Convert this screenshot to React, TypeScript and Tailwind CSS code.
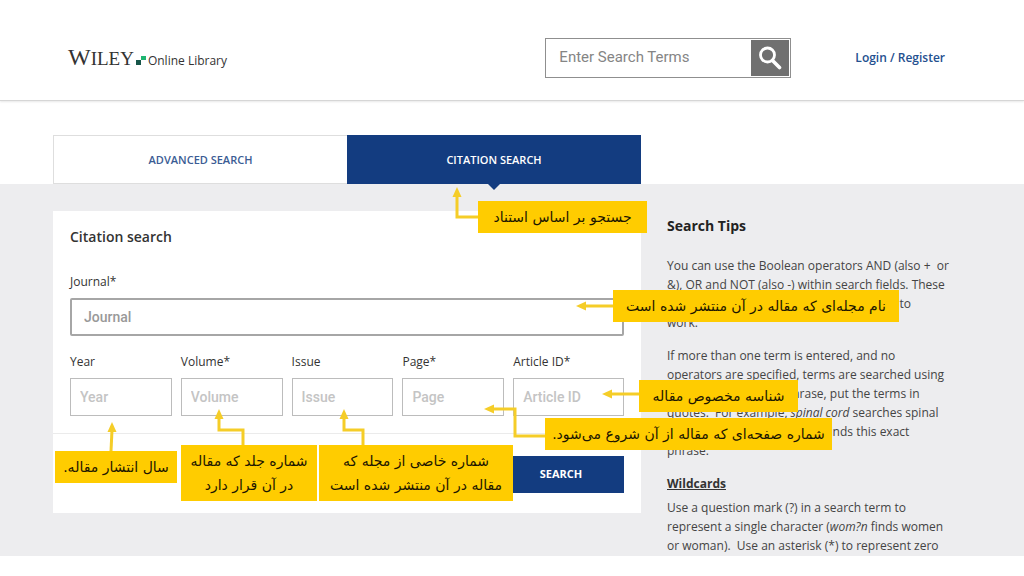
import type { ReactNode } from "react";

type Field = { id: string; label: string; placeholder: string };

const fields: Field[] = [
  { id: "year", label: "Year", placeholder: "Year" },
  { id: "volume", label: "Volume*", placeholder: "Volume" },
  { id: "issue", label: "Issue", placeholder: "Issue" },
  { id: "page", label: "Page*", placeholder: "Page" },
  { id: "article", label: "Article ID*", placeholder: "Article ID" },
];

function Logo() {
  return (
    <a href="#" className="flex items-baseline text-[#333]">
      <span className="font-['Liberation_Serif',serif] text-[24px] leading-6">
        W<span className="text-[19px]">ILEY</span>
      </span>
      <svg viewBox="0 0 10 9" className="mx-0.5 h-[9px] w-[10px]">
        <rect x="0" y="4" width="5" height="5" fill="#17564a" />
        <rect x="5" y="0" width="5" height="4" fill="#1fb571" />
      </svg>
      <span className="text-[12px] font-medium">Online Library</span>
    </a>
  );
}

function Header() {
  return (
    <header className="border-b border-[#d6d6d6] shadow-[0_1px_2px_#e8e8e8]">
      <div className="mx-auto flex h-[100px] max-w-[918px] items-center pt-[15px] pr-[26px] pl-[15px]">
        <Logo />
        <form className="ml-auto flex h-10 w-[246px] border border-[#8f8f8f]">
          <input
            type="search"
            aria-label="Enter Search Terms"
            placeholder="Enter Search Terms"
            className="min-w-0 flex-1 px-[13px] font-[Roboto,sans-serif] text-[15px] outline-none placeholder:text-[#858585]"
          />
          <button type="button" aria-label="Search" className="my-px mr-px flex w-[38px] items-center justify-center bg-[#707070]">
            <svg viewBox="0 0 24 24" className="h-6 w-6" fill="none" stroke="white">
              <circle cx="9.5" cy="9" r="7" strokeWidth="2.8" />
              <path d="M14.5 14.5l7 7" strokeWidth="3.6" strokeLinecap="round" />
            </svg>
          </button>
        </form>
        <a href="#" className="ml-16 text-[12px] font-semibold text-[#24508f]">
          Login / Register
        </a>
      </div>
    </header>
  );
}

function Tabs() {
  return (
    <div className="mx-auto grid max-w-[918px] grid-cols-[588fr_304fr] gap-[26px]">
      <nav className="grid h-[49px] grid-cols-2 text-[11px] font-semibold">
        <button type="button" className="border border-r-0 border-[#dedede] pt-0.5 text-[#3b5c94]">
          ADVANCED SEARCH
        </button>
        <button type="button" className="relative bg-[#133c80] pt-0.5 text-white">
          CITATION SEARCH
          <svg viewBox="0 0 12 6" className="absolute top-full left-1/2 h-[6px] w-3 -translate-x-1/2">
            <path d="M0 0H12L6 6Z" fill="#133c80" />
          </svg>
        </button>
      </nav>
    </div>
  );
}

function CitationForm() {
  return (
    <form className="bg-white px-[17px] pt-4 pb-5">
      <h2 className="text-[14px] leading-5 font-semibold text-[#333]">Citation search</h2>
      <div className="mt-[25px]">
        <label htmlFor="journal" className="block text-[12px] leading-5 text-[#333]">
          Journal*
        </label>
        <input
          id="journal"
          placeholder="Journal"
          className="mt-1.5 h-[38px] w-full rounded-[2px] border-2 border-[#a6a6a6] px-3 font-[Roboto,sans-serif] text-[14px] font-medium outline-none placeholder:text-[#999]"
        />
      </div>
      <div className="mt-4 grid grid-cols-[102fr_102fr_102fr_102fr_111fr] gap-[9px]">
        {fields.map((field) => (
          <div key={field.id}>
            <label htmlFor={field.id} className="block text-[12px] leading-5 text-[#333]">
              {field.label}
            </label>
            <input
              id={field.id}
              placeholder={field.placeholder}
              className="mt-1.5 h-[38px] w-full border border-[#bcbcbc] px-[9px] font-[Roboto,sans-serif] text-[14px] font-medium outline-none placeholder:text-[#c4c4c4]"
            />
          </div>
        ))}
      </div>
      <div className="-mx-[17px] mt-[17px] flex justify-end border-t border-[#ebebeb] px-[17px] pt-[22px]">
        <button type="button" className="h-[37px] w-[126px] bg-[#133c80] text-[11px] font-bold text-white">
          SEARCH
        </button>
      </div>
    </form>
  );
}

function SearchTips() {
  return (
    <aside className="pt-[5px] pb-px text-[12px] leading-[19px] whitespace-nowrap text-[#444]">
      <h2 className="text-[14px] leading-5 font-bold text-[#222]">Search Tips</h2>
      <p className="mt-5">
        You can use the Boolean operators AND (also +&nbsp; or
        <br />
        &amp;), OR and NOT (also -) within search fields. These
        <br />
        operators must be entered in upper case to
        <br />
        work.
      </p>
      <p className="mt-3.5">
        If more than one term is entered, and no
        <br />
        operators are specified, terms are searched using
        <br />
        AND. To search for a phrase, put the terms in
        <br />
        quotes.&nbsp; For example, <i>spinal cord</i> searches spinal
        <br />
        AND cord, and "spinal cord" finds this exact
        <br />
        phrase.
      </p>
      <h3 className="mt-3.5 font-bold text-[#333] underline">Wildcards</h3>
      <p className="mt-[5px]">
        Use a question mark (?) in a search term to
        <br />
        represent a single character (<i>wom?n</i> finds women
        <br />
        or woman).&nbsp; Use an asterisk (*) to represent zero
      </p>
    </aside>
  );
}

type CalloutProps = {
  className: string;
  arrowClassName: string;
  viewBox: string;
  line: string;
  head: string;
  children: ReactNode;
};

function Callout({ className, arrowClassName, viewBox, line, head, children }: CalloutProps) {
  return (
    <div dir="rtl" className={`absolute flex items-center justify-center bg-[#fc0] text-center whitespace-nowrap ${className}`}>
      <svg viewBox={viewBox} className={`absolute ${arrowClassName}`}>
        <path d={line} fill="none" stroke="#f5cd28" strokeWidth="3" />
        <path d={head} fill="#f5cd28" />
      </svg>
      <p>{children}</p>
    </div>
  );
}

function Annotations() {
  return (
    <div className="absolute inset-0 font-['DejaVu_Sans',sans-serif] text-[14px] leading-6 text-[#1c1600]">
      <Callout
        className="top-[17px] left-[425px] h-8 w-[169px]"
        arrowClassName="-top-[14px] right-full h-8 w-[26px]"
        viewBox="0 0 26 32"
        line="M26 30H5V8"
        head="M5 0L9.500 10H0.500Z"
      >
        جستجو بر اساس استناد
      </Callout>
      <Callout
        className="top-[106px] left-[560px] h-8 w-[286px]"
        arrowClassName="top-[11px] right-full h-[10px] w-[37px]"
        viewBox="0 0 37 10"
        line="M37 5H8"
        head="M0 5L10 0.500V9.500Z"
      >
        نام مجله‌ای که مقاله در آن منتشر شده است
      </Callout>
      <Callout
        className="top-[196px] left-[586px] h-8 w-[159px]"
        arrowClassName="top-[9px] right-full h-[10px] w-[37px]"
        viewBox="0 0 37 10"
        line="M37 5H8"
        head="M0 5L10 0.500V9.500Z"
      >
        شناسه مخصوص مقاله
      </Callout>
      <Callout
        className="top-[234px] left-[492px] h-8 w-[287px]"
        arrowClassName="-top-[14px] right-full h-9 w-[61px]"
        viewBox="0 0 61 36"
        line="M61 32H31V5H8"
        head="M0 5L10 0.500V9.500Z"
      >
        شماره صفحه‌ای که مقاله از آن شروع می‌شود.
      </Callout>
      <Callout
        className="top-[267px] left-[2px] h-8 w-[122px]"
        arrowClassName="bottom-full left-[52px] h-[29px] w-[10px]"
        viewBox="0 0 10 29"
        line="M4 29L5 8"
        head="M5 0L9.500 10H0.500Z"
      >
        سال انتشار مقاله.
      </Callout>
      <Callout
        className="top-[261px] left-[128px] h-14 w-[136px]"
        arrowClassName="bottom-full left-[33px] h-9 w-[31px]"
        viewBox="0 0 31 36"
        line="M29 36V21H5V8"
        head="M5 0L9.500 10H0.500Z"
      >
        شماره جلد که مقاله
        <br />
        در آن قرار دارد
      </Callout>
      <Callout
        className="top-[261px] left-[266px] h-14 w-[194px]"
        arrowClassName="bottom-full left-[20px] h-9 w-[31px]"
        viewBox="0 0 31 36"
        line="M24 36V21H5V8"
        head="M5 0L9.500 10H0.500Z"
      >
        شماره خاصی از مجله که
        <br />
        مقاله در آن منتشر شده است
      </Callout>
    </div>
  );
}

export default function App() {
  return (
    <div className="bg-white pb-5 font-['Open_Sans',sans-serif]">
      <Header />
      <main className="pt-[34px]">
        <Tabs />
        <div className="bg-[#ededef]">
          <div className="relative mx-auto grid max-w-[918px] grid-cols-[588fr_304fr] items-start gap-[26px] pt-[27px]">
            <CitationForm />
            <SearchTips />
            <Annotations />
          </div>
        </div>
      </main>
    </div>
  );
}
